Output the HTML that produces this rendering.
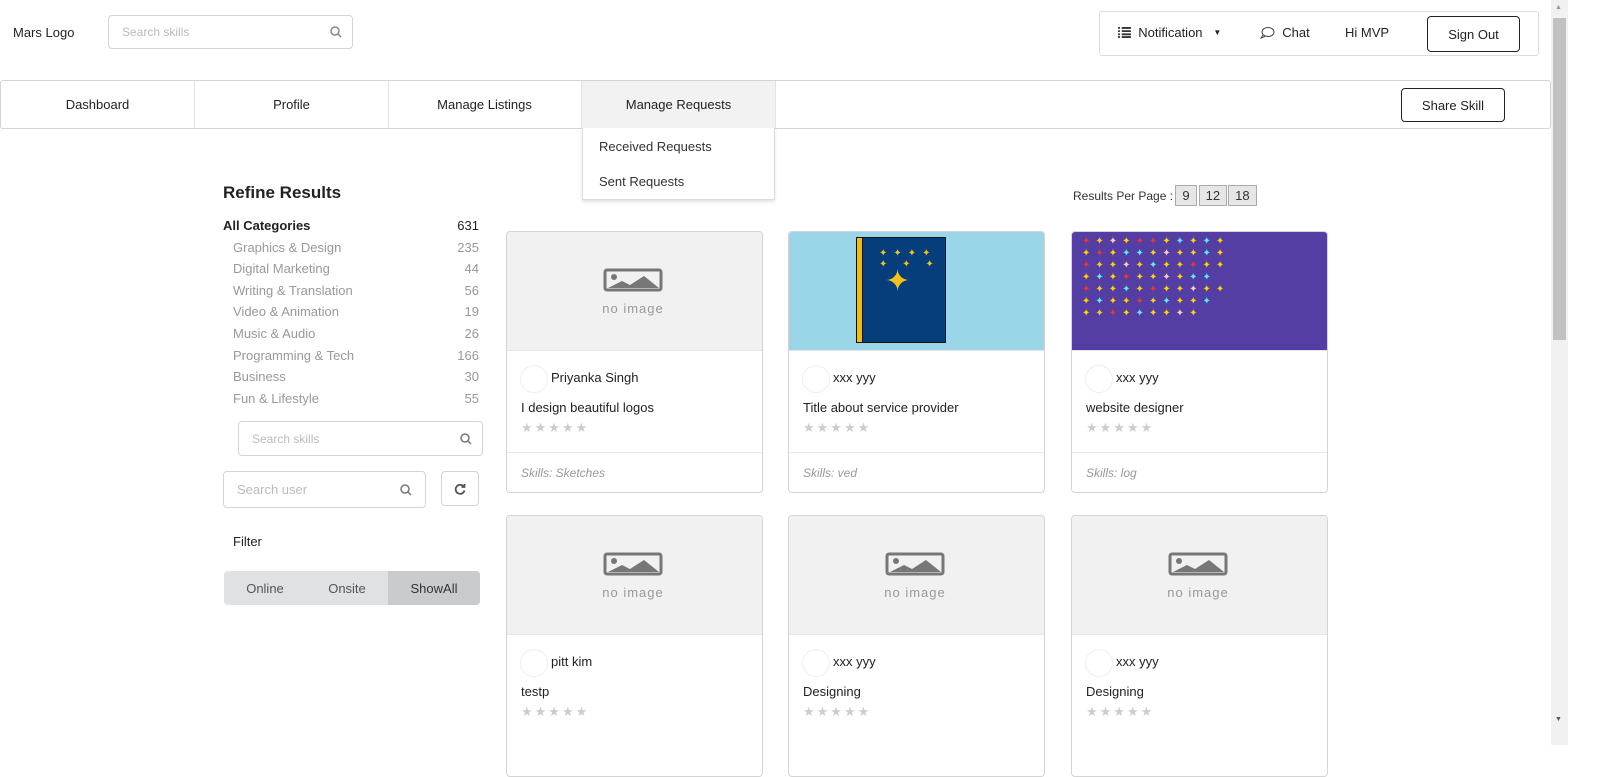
<!DOCTYPE html>
<html><head><meta charset="utf-8"><style>
*{box-sizing:border-box;margin:0;padding:0}
body{width:1600px;height:745px;overflow:hidden;background:#fff;font-family:"Liberation Sans",sans-serif;font-size:13px;color:#222;position:relative}
.a{position:absolute}
.inp{position:absolute;border:1px solid #d4d4d5;border-radius:4px;background:#fff;color:#bbb;font-size:12px;padding-left:13px;display:flex;align-items:center}
.inp svg{position:absolute;right:10px;top:50%;margin-top:-6px}
.btn{position:absolute;border:1px solid #222;border-radius:4px;display:flex;align-items:center;justify-content:center;font-size:13px;background:#fff}
.nav{position:absolute;left:0;top:80px;width:1551px;height:49px;border:1px solid #d4d4d5;border-radius:3px}
.ni{position:absolute;top:0;height:47px;width:194px;border-right:1px solid #e3e3e3;display:flex;align-items:center;justify-content:center;font-size:13px}
.cat{position:absolute;left:233px;width:246px;font-size:13px;color:#999;display:flex;justify-content:space-between}
.card{position:absolute;width:257px;height:262px;border:1px solid #d4d4d5;border-radius:4px;overflow:hidden;background:#fff}
.img{height:119px;background:#f1f1f1;position:relative;border-bottom:1px solid #e5e5e5}
.av{position:absolute;left:13px;top:133px;width:28px;height:28px;border-radius:50%;border:1px solid #eee;background:#fff}
.nm{position:absolute;left:44px;top:138px;font-size:13px}
.tt{position:absolute;left:14px;top:168px;font-size:13px}
.st{position:absolute;left:14px;top:188px;color:#ccc;font-size:13px;letter-spacing:2px}
.ft{position:absolute;left:0;right:0;top:220px;border-top:1px solid #e8e8e8;padding:13px 14px;font-style:italic;color:#999;font-size:12px}
.pp{display:inline-block;border:1px solid #aaa;background:#e6e6e6;padding:2px 6px;font-size:13px;margin-left:-1px}
.noi{position:absolute;left:96px;top:36px}
</style></head><body>
<div class="a" style="left:13px;top:25px">Mars Logo</div>
<div class="inp" style="left:108px;top:15px;width:245px;height:34px">Search skills<svg width="12" height="12" viewBox="0 0 12 12"><circle cx="5" cy="5" r="4" fill="none" stroke="#888" stroke-width="1.5"/><path d="M8 8l3 3" stroke="#888" stroke-width="1.5"/></svg></div>
<div class="a" style="left:1099px;top:11px;width:440px;height:45px;border:1px solid #ddd;border-radius:3px"></div>
<div class="a" style="left:1118px;top:25px;display:flex;align-items:center"><svg width="13" height="11" viewBox="0 0 14 12"><path d="M0 1h2M4 1h10M0 4.5h2M4 4.5h10M0 8h2M4 8h10M0 11h2M4 11h10" stroke="#333" stroke-width="2"/></svg>&nbsp; Notification &nbsp;&nbsp;<span style="font-size:8px">▼</span></div>
<div class="a" style="left:1260px;top:25px;display:flex;align-items:center"><svg width="15" height="13" viewBox="0 0 15 13"><ellipse cx="8" cy="6" rx="6" ry="4.5" fill="none" stroke="#444"/><path d="M3 9l-2 3 4-1.5" fill="none" stroke="#444"/></svg>&nbsp; Chat</div>
<div class="a" style="left:1345px;top:25px">Hi MVP</div>
<div class="btn" style="left:1427px;top:16px;width:93px;height:36px">Sign Out</div>
<div class="nav">
<div class="ni" style="left:0">Dashboard</div>
<div class="ni" style="left:194px">Profile</div>
<div class="ni" style="left:387px">Manage Listings</div>
<div class="ni" style="left:581px;background:#f2f2f2">Manage Requests</div>
</div>
<div class="btn" style="left:1401px;top:88px;width:104px;height:34px">Share Skill</div>
<div class="a" style="left:582px;top:128px;width:193px;height:72px;background:#fff;border:1px solid #ddd;border-top:none;box-shadow:0 2px 3px rgba(0,0,0,.12);color:#333">
<div style="position:absolute;left:16px;top:11px">Received Requests</div>
<div style="position:absolute;left:16px;top:46px">Sent Requests</div></div>
<div class="a" style="left:223px;top:183px;font-size:17px;font-weight:bold;color:#222">Refine Results</div>
<div class="cat" style="left:223px;width:256px;top:218px;color:#222;font-weight:bold"><span>All Categories</span><span style="font-weight:normal">631</span></div>
<div class="cat" style="top:240px"><span>Graphics &amp; Design</span><span>235</span></div>
<div class="cat" style="top:261px"><span>Digital Marketing</span><span>44</span></div>
<div class="cat" style="top:283px"><span>Writing &amp; Translation</span><span>56</span></div>
<div class="cat" style="top:304px"><span>Video &amp; Animation</span><span>19</span></div>
<div class="cat" style="top:326px"><span>Music &amp; Audio</span><span>26</span></div>
<div class="cat" style="top:348px"><span>Programming &amp; Tech</span><span>166</span></div>
<div class="cat" style="top:369px"><span>Business</span><span>30</span></div>
<div class="cat" style="top:391px"><span>Fun &amp; Lifestyle</span><span>55</span></div>
<div class="inp" style="left:238px;top:421px;width:245px;height:35px">Search skills<svg width="12" height="12" viewBox="0 0 12 12"><circle cx="5" cy="5" r="4" fill="none" stroke="#777" stroke-width="1.5"/><path d="M8 8l3 3" stroke="#777" stroke-width="1.5"/></svg></div>
<div class="inp" style="left:223px;top:471px;width:203px;height:37px;font-size:13px">Search user<svg width="12" height="12" viewBox="0 0 12 12" style="right:13px"><circle cx="5" cy="5" r="4" fill="none" stroke="#777" stroke-width="1.5"/><path d="M8 8l3 3" stroke="#777" stroke-width="1.5"/></svg></div>
<div class="a" style="left:441px;top:471px;width:38px;height:35px;border:1px solid #d4d4d5;border-radius:4px;display:flex;align-items:center;justify-content:center"><svg width="12" height="12" viewBox="0 0 12 12"><path d="M10 4A4.5 4.5 0 1 0 10.5 7.5" fill="none" stroke="#555" stroke-width="1.8"/><path d="M7.5 4h3v-3" fill="none" stroke="#555" stroke-width="1.8"/></svg></div>
<div class="a" style="left:233px;top:534px">Filter</div>
<div class="a" style="left:224px;top:571px;width:256px;height:34px;background:#e0e1e2;border-radius:4px;display:flex;color:#555;overflow:hidden">
<div style="width:82px;display:flex;align-items:center;justify-content:center">Online</div>
<div style="width:82px;display:flex;align-items:center;justify-content:center">Onsite</div>
<div style="flex:1;background:#cacbcd;color:#333;display:flex;align-items:center;justify-content:center">ShowAll</div></div>
<div class="a" style="left:1073px;top:185px;font-size:12px;color:#333">Results Per Page : <span class="pp">9</span><span class="pp" style="margin-left:2px">12</span><span class="pp" style="margin-left:1px">18</span></div>

<svg width="0" height="0" style="position:absolute"><defs><g id="ni"><rect x="2" y="2" width="56" height="20" rx="2" fill="none" stroke="#777" stroke-width="3"/><circle cx="11" cy="9" r="3" fill="#777"/><path d="M5 20l14-7 8 4 14-9 15 12z" fill="#777"/><text x="30" y="45" text-anchor="middle" font-family="Liberation Sans,sans-serif" font-size="13" fill="#999" letter-spacing="1">no image</text></g></defs></svg>

<div class="card" style="left:506px;top:231px"><div class="img"><svg class="noi" width="62" height="50"><use href="#ni"/></svg></div><div class="av"></div><div class="nm">Priyanka Singh</div><div class="tt">I design beautiful logos</div><div class="st">★★★★★</div><div class="ft">Skills: Sketches</div></div>
<div class="card" style="left:788px;top:231px"><div class="img" style="background:#9bd6e8"><div style="position:absolute;left:67px;top:5px;width:90px;height:106px;background:#053e7a;border:1px solid #111"></div><div style="position:absolute;left:67px;top:5px;width:7px;height:106px;background:#f3c000;border:1px solid #111"></div><div style="position:absolute;left:96px;top:32px;color:#f6c21a;font-size:30px">✦</div><div style="position:absolute;left:90px;top:16px;color:#f6c21a;font-size:10px;letter-spacing:6px">✦✦✦✦<br>✦ ✦ ✦</div></div><div class="av"></div><div class="nm">xxx yyy</div><div class="tt">Title about service provider</div><div class="st">★★★★★</div><div class="ft">Skills: ved</div></div>
<div class="card" style="left:1071px;top:231px"><div class="img" style="background:#553ea3;overflow:hidden;font-size:10px;line-height:12px;padding:4px 10px;letter-spacing:5px;color:#ffd400"><span style="color:#e33">✦</span>✦<span style="color:#fcb">✦</span>✦<span style="color:#e33">✦✦</span>✦<span style="color:#5ef">✦</span>✦<span style="color:#5ef">✦</span>✦<br>✦<span style="color:#e33">✦</span>✦<span style="color:#5ef">✦✦</span>✦<span style="color:#fcb">✦</span>✦✦<span style="color:#5ef">✦</span>✦<br><span style="color:#e33">✦</span>✦✦<span style="color:#fcb">✦</span>✦<span style="color:#5ef">✦</span>✦✦<span style="color:#e33">✦</span>✦✦<br>✦<span style="color:#5ef">✦</span>✦<span style="color:#e33">✦</span>✦✦<span style="color:#fcb">✦</span>✦<span style="color:#5ef">✦✦</span><br><span style="color:#e33">✦</span>✦✦<span style="color:#5ef">✦</span>✦<span style="color:#e33">✦</span>✦✦<span style="color:#fcb">✦</span>✦✦<br>✦<span style="color:#5ef">✦</span>✦✦<span style="color:#e33">✦</span>✦<span style="color:#5ef">✦</span>✦✦<span style="color:#5ef">✦</span><br>✦✦<span style="color:#e33">✦</span>✦<span style="color:#5ef">✦</span>✦✦<span style="color:#fcb">✦</span>✦</div><div class="av"></div><div class="nm">xxx yyy</div><div class="tt">website designer</div><div class="st">★★★★★</div><div class="ft">Skills: log</div></div>
<div class="card" style="left:506px;top:515px"><div class="img"><svg class="noi" width="62" height="50"><use href="#ni"/></svg></div><div class="av"></div><div class="nm">pitt kim</div><div class="tt">testp</div><div class="st">★★★★★</div></div>
<div class="card" style="left:788px;top:515px"><div class="img"><svg class="noi" width="62" height="50"><use href="#ni"/></svg></div><div class="av"></div><div class="nm">xxx yyy</div><div class="tt">Designing</div><div class="st">★★★★★</div></div>
<div class="card" style="left:1071px;top:515px"><div class="img"><svg class="noi" width="62" height="50"><use href="#ni"/></svg></div><div class="av"></div><div class="nm">xxx yyy</div><div class="tt">Designing</div><div class="st">★★★★★</div></div>

<div class="a" style="left:1551px;top:0;width:17px;height:745px;background:#f1f1f1"></div>
<div class="a" style="left:1553px;top:18px;width:13px;height:322px;background:#c1c1c1"></div>
<div class="a" style="left:1555px;top:4px;font-size:7px;color:#999">▲</div>
<div class="a" style="left:1555px;top:716px;font-size:7px;color:#555">▼</div>
</body></html>
